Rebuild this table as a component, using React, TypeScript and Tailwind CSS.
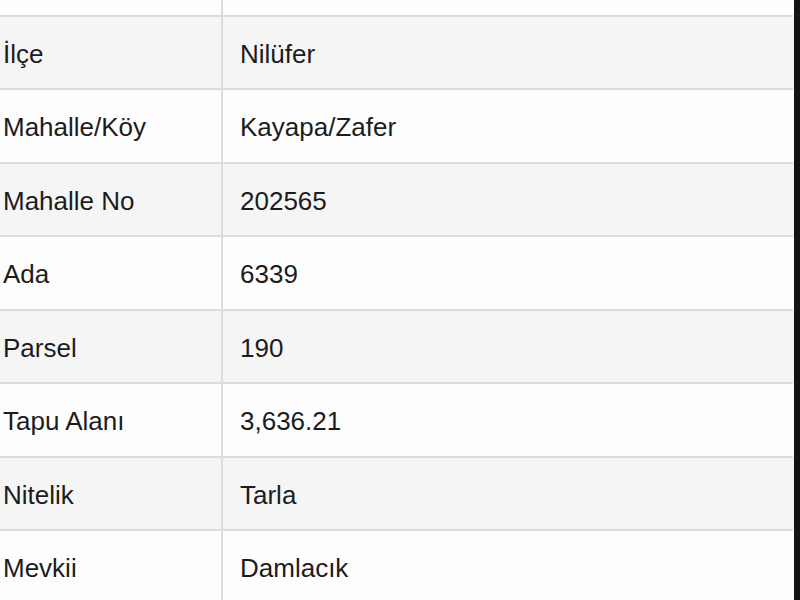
import React from "react";

const rows: { label: string; value: string }[] = [
  { label: "İlçe", value: "Nilüfer" },
  { label: "Mahalle/Köy", value: "Kayapa/Zafer" },
  { label: "Mahalle No", value: "202565" },
  { label: "Ada", value: "6339" },
  { label: "Parsel", value: "190" },
  { label: "Tapu Alanı", value: "3,636.21" },
  { label: "Nitelik", value: "Tarla" },
  { label: "Mevkii", value: "Damlacık" },
];

export default function App() {
  return (
    <div
      className="w-[800px] h-[600px] overflow-hidden bg-[#111315] flex"
      style={{ fontFamily: '"Liberation Sans", Arial, sans-serif' }}
    >
      <div className="w-[794px] h-full bg-[#fdfdfd] flex flex-col">
        <div className="h-[15px] flex shrink-0 bg-[#fdfdfd]">
          <div className="w-[221px] shrink-0" />
          <div className="w-[2px] bg-[#dcdcdc] shrink-0" />
          <div className="flex-1" />
        </div>
        {rows.map((r, i) => (
          <div key={r.label} className="flex flex-col shrink-0">
            <div className="h-[2px] bg-[#dcdcdc] mr-[1px]" />
            <div
              className={`flex ${i % 2 === 0 ? "h-[71px] bg-[#f5f5f5]" : "h-[72px] bg-[#fdfdfd]"}`}
            >
              <div className="w-[221px] shrink-0 flex items-center pl-[3px] pt-[2px] text-[26px] text-[#1c1c1c] leading-none">
                {r.label}
              </div>
              <div className="w-[2px] bg-[#dcdcdc] shrink-0" />
              <div className="flex-1 flex items-center pl-[17px] pt-[2px] text-[26px] text-[#1c1c1c] leading-none">
                {r.value}
              </div>
            </div>
          </div>
        ))}
      </div>
    </div>
  );
}
